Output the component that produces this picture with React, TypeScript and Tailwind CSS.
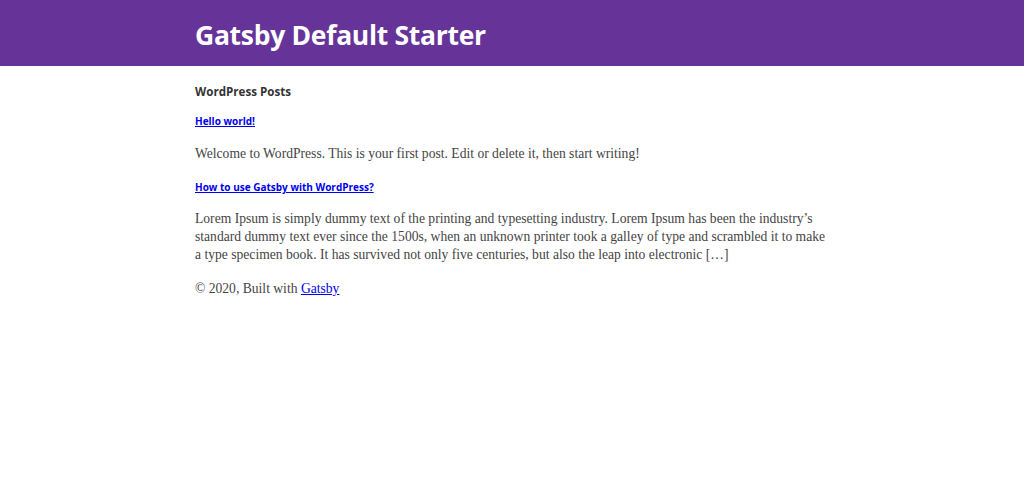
import React from 'react';

const posts = [
  {
    title: 'Hello world!',
    excerpt: 'Welcome to WordPress. This is your first post. Edit or delete it, then start writing!',
  },
  {
    title: 'How to use Gatsby with WordPress?',
    excerpt:
      'Lorem Ipsum is simply dummy text of the printing and typesetting industry. Lorem Ipsum has been the industry\u2019s standard dummy text ever since the 1500s, when an unknown printer took a galley of type and scrambled it to make a type specimen book. It has survived not only five centuries, but also the leap into electronic [\u2026]',
  },
];

const App: React.FC = () => {
  return (
    <div className="min-h-[477px] bg-white font-['Liberation_Serif',serif] text-[#444]">
      {/* Header */}
      <header className="bg-[#663399] h-[66px]">
        <div className="w-[634px] mx-auto pt-[19px]">
          <h1 className="font-['Open_Sans',sans-serif] font-bold text-white text-[26.5px] leading-[32px] tracking-[-0.3px]">
            Gatsby Default Starter
          </h1>
        </div>
      </header>

      <main className="w-[634px] mx-auto pt-[18px]">
        <h2 className="font-['Open_Sans',sans-serif] font-bold text-[11.6px] leading-[16px] text-[#333]">
          WordPress Posts
        </h2>

        {posts.map((p, i) => (
          <div key={p.title}>
            <h3
              className={`${i === 0 ? 'mt-[13px]' : 'mt-[16px]'} font-['Open_Sans',sans-serif] font-bold text-[10px] leading-[16px]`}
            >
              <a href="#" className="text-[#0000ee] underline">
                {p.title}
              </a>
            </h3>
            <p className={`${i === 0 ? 'mt-[16px]' : 'mt-[15px]'} text-[13.6px] leading-[18px]`}>{p.excerpt}</p>
          </div>
        ))}

        <footer className="mt-[16px] text-[13.6px] leading-[18px]">
          © 2020, Built with{' '}
          <a href="#" className="text-[#0000ee] underline">
            Gatsby
          </a>
        </footer>
      </main>
    </div>
  );
};

export default App;
